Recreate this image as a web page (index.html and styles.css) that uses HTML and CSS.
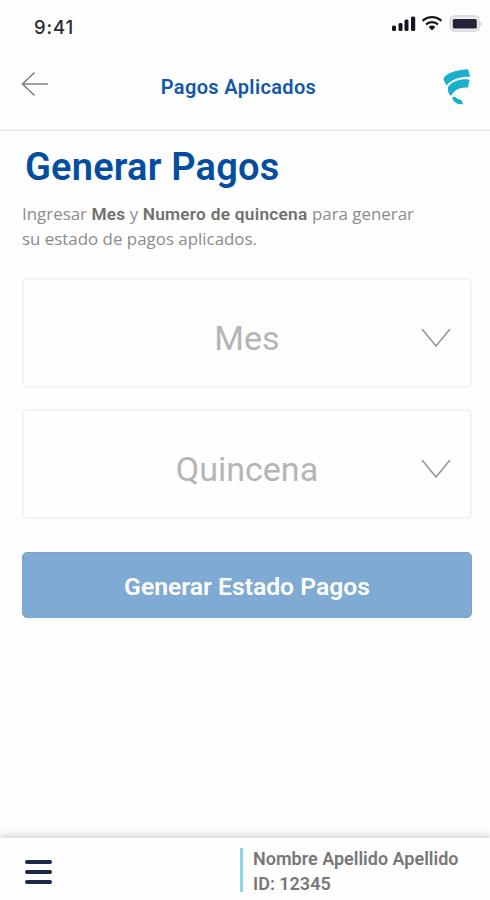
FILE: index.html
```html
<!DOCTYPE html>
<html lang="es">
<head>
    <meta charset="UTF-8">
    <meta name="viewport" content="width=device-width, initial-scale=1.0">
    <title>Pagos Aplicados</title>
    <link rel="stylesheet" href="styles.css">
</head>
<body>
    <div class="app">
        <div class="status-bar">
            <span class="time">9:41</span>
            <svg class="status-icons" width="92" height="20" viewBox="0 0 92 20">
                <g fill="#15151f">
                    <rect x="2" y="11.5" width="4" height="5.5" rx="1.5"/>
                    <rect x="8.5" y="9" width="4" height="8" rx="1.5"/>
                    <rect x="14.5" y="5.5" width="4" height="11.5" rx="1.5"/>
                    <rect x="21" y="2.5" width="4.2" height="14.5" rx="1.5"/>
                    <path d="M38.6 12.9a5.3 5.3 0 0 1 6.8 0L42 16.6z"/>
                </g>
                <g fill="none" stroke="#15151f" stroke-width="2.3">
                    <path d="M32.6 6.8a13.8 13.8 0 0 1 18.8 0"/>
                    <path d="M36 10.5a8.8 8.8 0 0 1 12 0"/>
                </g>
                <rect x="60.5" y="2" width="28.5" height="15" rx="4.5" fill="#eee" stroke="#dcdcdc" stroke-width="2"/>
                <rect x="90" y="8" width="1.5" height="4" fill="#dcdcdc"/>
                <rect x="62.8" y="5" width="24" height="9.5" rx="1.5" fill="#23243a"/>
            </svg>
        </div>

        <div class="header">
            <svg class="back" width="28" height="26" viewBox="0 0 28 26">
                <path d="M27 13H1.5M13.5 1.5L1.5 13l12 11.5" fill="none" stroke="#808080" stroke-width="1.6"/>
            </svg>
            <h2>Pagos Aplicados</h2>
            <svg class="logo" width="28" height="37" viewBox="0 0 28 37">
                <g fill="#18b0cd">
                    <path d="M3.5 17.500L0.500 11.500Q0.500 8 7 5C12 2.700 18 1.500 25 1.200L27.200 8.800C17 8.500 9 11 3.500 17.500z"/>
                    <path d="M8 28Q4 24 5 19C9 13.500 16 11 25 11.300L26.500 12L25 19.500C17 18.800 11 22 8 28z"/>
                    <path d="M9.300 30Q10 28 12.300 29Q15 32 18.300 32L20.300 36.300C15 36.800 10.500 34.500 9.300 30z"/>
                </g>
            </svg>
        </div>

        <div class="content">
            <h1>Generar Pagos</h1>
            <p class="intro">Ingresar <b>Mes</b> y <b>Numero de quincena</b> para generar<br>su estado de pagos aplicados.</p>

            <button class="select">
                <span>Mes</span>
                <svg width="30" height="20" viewBox="0 0 30 20">
                    <path d="M1 1l14 17L29 1" fill="none" stroke="#949499" stroke-width="1.5"/>
                </svg>
            </button>
            <button class="select">
                <span>Quincena</span>
                <svg width="30" height="20" viewBox="0 0 30 20">
                    <path d="M1 1l14 17L29 1" fill="none" stroke="#949499" stroke-width="1.5"/>
                </svg>
            </button>
            <button class="submit">Generar Estado Pagos</button>
        </div>

        <div class="footer">
            <div class="menu">
                <span></span>
                <span></span>
                <span></span>
            </div>
            <div class="user">
                <div class="name">Nombre Apellido Apellido</div>
                <div class="id">ID: 12345</div>
            </div>
        </div>
    </div>
</body>
</html>
```
FILE: styles.css
```css
body {
    margin: 0;
    background-color: #fefefe;
    font-family: Roboto, "Liberation Sans", sans-serif;
}

.app {
    display: flex;
    flex-direction: column;
    height: 900px;
    overflow: hidden;
}

.status-bar {
    display: flex;
    justify-content: space-between;
    height: 50px;
    padding: 14px 8px 0 34px;
    box-sizing: border-box;
}

.time {
    font-family: Inter, sans-serif;
    font-size: 18.5px;
    font-weight: 500;
    line-height: 26px;
    letter-spacing: 0.9px;
    color: #2b2b33;
}

.header {
    display: flex;
    justify-content: space-between;
    height: 81px;
    padding: 18px 19px 0 21px;
    border-bottom: 2px solid #eceeef;
    box-sizing: border-box;
}

.back {
    margin-top: 3px;
}

.header h2 {
    flex: 1;
    margin: 6px 15px 0 0;
    text-align: center;
    font-size: 20px;
    font-weight: 600;
    line-height: 26px;
    letter-spacing: 0.35px;
    color: #1457a8;
}

.content {
    flex: 1;
    padding: 0 18px 0 22px;
}

h1 {
    margin: 14px 0 0 3px;
    font-size: 38px;
    font-weight: 600;
    line-height: 44px;
    letter-spacing: 0.2px;
    color: #044ea2;
}

.intro {
    margin: 12px 0 27px;
    font-family: "Open Sans", "Noto Sans", sans-serif;
    font-size: 16.9px;
    line-height: 25px;
    color: #8c8c8c;
}

.intro b {
    font-family: Roboto, sans-serif;
    font-size: 17.3px;
    font-weight: 600;
    letter-spacing: 0.25px;
    line-height: 1;
    color: #707070;
}

.select {
    display: flex;
    align-items: center;
    width: 100%;
    height: 110px;
    margin-bottom: 21px;
    padding: 10px 19px 0 49px;
    background-color: #fefefe;
    border: 2px solid #f3f3f4;
    border-radius: 5px;
    box-sizing: border-box;
    font-family: inherit;
    font-size: 34px;
    color: #b5b5b5;
}

.select span {
    flex: 1;
}

.submit {
    display: block;
    width: 100%;
    height: 66px;
    margin-top: 33px;
    padding-top: 3px;
    background-color: #7eaad4;
    border: 1px solid #76a3cf;
    border-radius: 5px;
    font-family: inherit;
    font-size: 24.7px;
    font-weight: 600;
    color: #fff;
}

.footer {
    display: flex;
    height: 62px;
    padding: 10px 24px 0 25px;
    background-color: #fefefe;
    box-shadow: 0 -3px 6px 1px #dcdfde;
    box-sizing: border-box;
}

.menu {
    display: flex;
    flex-direction: column;
    gap: 6px;
    width: 215px;
    padding-top: 12px;
}

.menu span {
    width: 27px;
    height: 4px;
    background-color: #1c2845;
    border-radius: 2px;
}

.user {
    height: 44px;
    padding-left: 10px;
    border-left: 3px solid #8cd6e3;
    font-size: 18px;
    font-weight: 600;
    line-height: 25px;
    color: #777;
    white-space: nowrap;
}

.user div {
    margin-top: -2px;
    margin-bottom: 2px;
}
```
